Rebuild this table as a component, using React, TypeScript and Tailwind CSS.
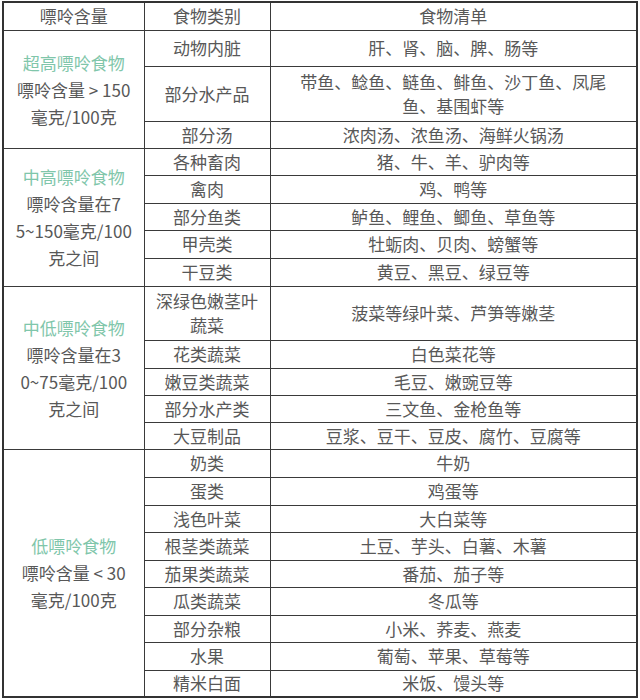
type Item = { cat: string[]; list: string[]; h: string };
type Group = { title: string; desc: string[]; items: Item[] };

const groups: Group[] = [
  {
    title: '超高嘌呤食物',
    desc: ['嘌呤含量 > 150', '毫克/100克'],
    items: [
      { cat: ['动物内脏'], list: ['肝、肾、脑、脾、肠等'], h: 'h-[36px]' },
      { cat: ['部分水产品'], list: ['带鱼、鲶鱼、鲢鱼、鲱鱼、沙丁鱼、凤尾', '鱼、基围虾等'], h: 'h-[55px]' },
      { cat: ['部分汤'], list: ['浓肉汤、浓鱼汤、海鲜火锅汤'], h: 'h-[27px]' },
    ],
  },
  {
    title: '中高嘌呤食物',
    desc: ['嘌呤含量在7', '5~150毫克/100', '克之间'],
    items: [
      { cat: ['各种畜肉'], list: ['猪、牛、羊、驴肉等'], h: 'h-[27px]' },
      { cat: ['禽肉'], list: ['鸡、鸭等'], h: 'h-[28px]' },
      { cat: ['部分鱼类'], list: ['鲈鱼、鲤鱼、鲫鱼、草鱼等'], h: 'h-[27px]' },
      { cat: ['甲壳类'], list: ['牡蛎肉、贝肉、螃蟹等'], h: 'h-[28px]' },
      { cat: ['干豆类'], list: ['黄豆、黑豆、绿豆等'], h: 'h-[28px]' },
    ],
  },
  {
    title: '中低嘌呤食物',
    desc: ['嘌呤含量在3', '0~75毫克/100', '克之间'],
    items: [
      { cat: ['深绿色嫩茎叶', '蔬菜'], list: ['菠菜等绿叶菜、芦笋等嫩茎'], h: 'h-[54px]' },
      { cat: ['花类蔬菜'], list: ['白色菜花等'], h: 'h-[28px]' },
      { cat: ['嫩豆类蔬菜'], list: ['毛豆、嫩豌豆等'], h: 'h-[27px]' },
      { cat: ['部分水产类'], list: ['三文鱼、金枪鱼等'], h: 'h-[27px]' },
      { cat: ['大豆制品'], list: ['豆浆、豆干、豆皮、腐竹、豆腐等'], h: 'h-[27px]' },
    ],
  },
  {
    title: '低嘌呤食物',
    desc: ['嘌呤含量 < 30', '毫克/100克'],
    items: [
      { cat: ['奶类'], list: ['牛奶'], h: 'h-[28px]' },
      { cat: ['蛋类'], list: ['鸡蛋等'], h: 'h-[28px]' },
      { cat: ['浅色叶菜'], list: ['大白菜等'], h: 'h-[27px]' },
      { cat: ['根茎类蔬菜'], list: ['土豆、芋头、白薯、木薯'], h: 'h-[28px]' },
      { cat: ['茄果类蔬菜'], list: ['番茄、茄子等'], h: 'h-[27px]' },
      { cat: ['瓜类蔬菜'], list: ['冬瓜等'], h: 'h-[28px]' },
      { cat: ['部分杂粮'], list: ['小米、荞麦、燕麦'], h: 'h-[27px]' },
      { cat: ['水果'], list: ['葡萄、苹果、草莓等'], h: 'h-[28px]' },
      { cat: ['精米白面'], list: ['米饭、馒头等'], h: 'h-[27px]' },
    ],
  },
];

const cell = 'border border-[#3a3a3a] p-0 text-center align-middle';

function Lines({ lines }: { lines: string[] }) {
  return (
    <>
      {lines.map((l) => (
        <div key={l} className="leading-[24px] whitespace-pre">
          {l}
        </div>
      ))}
    </>
  );
}

export default function App() {
  return (
    <div className="min-h-screen bg-white pl-[2px] pt-[1px]">
      <table
        className="w-[636px] table-fixed border-collapse border-2 border-[#333] text-[17px] leading-[22px] text-[#585858]"
        style={{ fontFamily: '"Noto Sans CJK SC", "Noto Sans", sans-serif' }}
      >
        <colgroup>
          <col className="w-[141px]" />
          <col className="w-[126px]" />
          <col />
        </colgroup>
        <thead>
          <tr className="h-[28px]">
            <th className={`${cell} font-normal`}>嘌呤含量</th>
            <th className={`${cell} font-normal`}>食物类别</th>
            <th className={`${cell} font-normal`}>食物清单</th>
          </tr>
        </thead>
        <tbody>
          {groups.map((g) =>
            g.items.map((it, i) => (
              <tr key={g.title + it.cat[0]} className={it.h}>
                {i === 0 && (
                  <td rowSpan={g.items.length} className={cell}>
                    <div className="leading-[27px] text-[#80c6aa]">{g.title}</div>
                    {g.desc.map((d) => (
                      <div key={d} className="leading-[27px] whitespace-pre">
                        {d}
                      </div>
                    ))}
                  </td>
                )}
                <td className={cell}>
                  <Lines lines={it.cat} />
                </td>
                <td className={cell}>
                  <Lines lines={it.list} />
                </td>
              </tr>
            ))
          )}
        </tbody>
      </table>
    </div>
  );
}
